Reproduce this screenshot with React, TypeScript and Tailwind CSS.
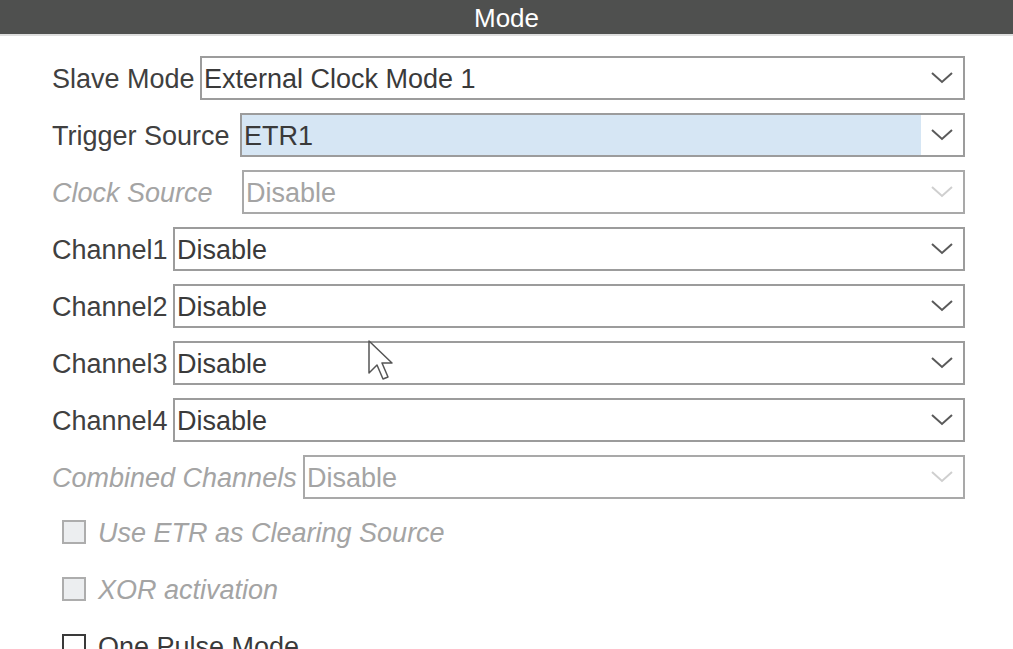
import React from 'react';

type SelectProps = {
  value: string;
  disabled?: boolean;
  highlighted?: boolean;
};

const Chevron: React.FC<{ disabled?: boolean }> = ({ disabled }) => (
  <svg width="22" height="12" viewBox="0 0 22 12" className="shrink-0">
    <path
      d="M1 1 L11 10 L21 1"
      fill="none"
      stroke={disabled ? '#cfcfcf' : '#5a5a5a'}
      strokeWidth="2"
    />
  </svg>
);

const Select: React.FC<SelectProps> = ({ value, disabled, highlighted }) => (
  <div
    className={`flex-1 h-[44px] flex items-stretch border-2 ${
      disabled ? 'border-[#a9a9a9]' : 'border-[#9c9c9c]'
    } bg-white`}
  >
    <div
      className={`flex-1 flex items-center pl-[2px] pt-[3px] ${
        highlighted ? 'bg-[#d6e6f4]' : ''
      } ${disabled ? 'text-[#a4a4a4]' : 'text-[#3a3a3a]'}`}
    >
      {value}
    </div>
    <div className="w-[42px] flex items-center justify-start pl-[10px]">
      <Chevron disabled={disabled} />
    </div>
  </div>
);

const Row: React.FC<{
  label: string;
  labelWidth: string;
  value: string;
  disabled?: boolean;
  highlighted?: boolean;
}> = ({ label, labelWidth, value, disabled, highlighted }) => (
  <div className="flex items-center h-[44px]">
    <div
      className={`${labelWidth} shrink-0 whitespace-nowrap pt-[3px] ${
        disabled ? 'italic text-[#a4a4a4]' : 'text-[#404040]'
      }`}
    >
      {label}
    </div>
    <Select value={value} disabled={disabled} highlighted={highlighted} />
  </div>
);

const Check: React.FC<{ label: string; disabled?: boolean }> = ({ label, disabled }) => (
  <div className="flex items-center h-[44px] pl-[10px] gap-[12px]">
    <div
      className={`w-[24px] h-[24px] shrink-0 border-2 ${
        disabled ? 'border-[#adadad] bg-[#eceef0]' : 'border-[#3a3a3a] bg-white'
      }`}
    />
    <span className={`pt-[3px] ${disabled ? 'italic text-[#a4a4a4]' : 'text-[#3a3a3a]'}`}>
      {label}
    </span>
  </div>
);

export default function App() {
  return (
    <div
      className="relative w-[1013px] h-[649px] overflow-hidden bg-white text-[27px] leading-none"
      style={{ fontFamily: '"Liberation Sans", Arial, sans-serif' }}
    >
      {/* Header */}
      <div className="h-[34px] bg-[#4f504f] border-b-2 border-[#dedede] box-content flex items-center justify-center">
        <span className="text-white text-[26px] pt-[2px]">Mode</span>
      </div>

      {/* Selects */}
      <div className="pl-[52px] pr-[48px] pt-[20px]">
        <div className="flex flex-col gap-[13px]">
          <Row label="Slave Mode" labelWidth="w-[148px]" value="External Clock Mode 1" />
          <Row label="Trigger Source" labelWidth="w-[188px]" value="ETR1" highlighted />
          <Row label="Clock Source" labelWidth="w-[190px]" value="Disable" disabled />
          <Row label="Channel1" labelWidth="w-[121px]" value="Disable" />
          <Row label="Channel2" labelWidth="w-[121px]" value="Disable" />
          <Row label="Channel3" labelWidth="w-[121px]" value="Disable" />
          <Row label="Channel4" labelWidth="w-[121px]" value="Disable" />
          <Row label="Combined Channels" labelWidth="w-[251px]" value="Disable" disabled />
        </div>

        {/* Checkboxes */}
        <div className="flex flex-col gap-[13px] mt-[11px]">
          <Check label="Use ETR as Clearing Source" disabled />
          <Check label="XOR activation" disabled />
          <Check label="One Pulse Mode" />
        </div>
      </div>

      {/* Mouse pointer */}
      <svg
        className="absolute left-[368px] top-[340px]"
        width="28"
        height="42"
        viewBox="0 0 28 42"
      >
        <path
          d="M1 1 L1 33 L9 25 L15 39 L20 37 L14 23 L24 23 Z"
          fill="white"
          stroke="#555"
          strokeWidth="1.5"
          strokeLinejoin="round"
        />
      </svg>
    </div>
  );
}
